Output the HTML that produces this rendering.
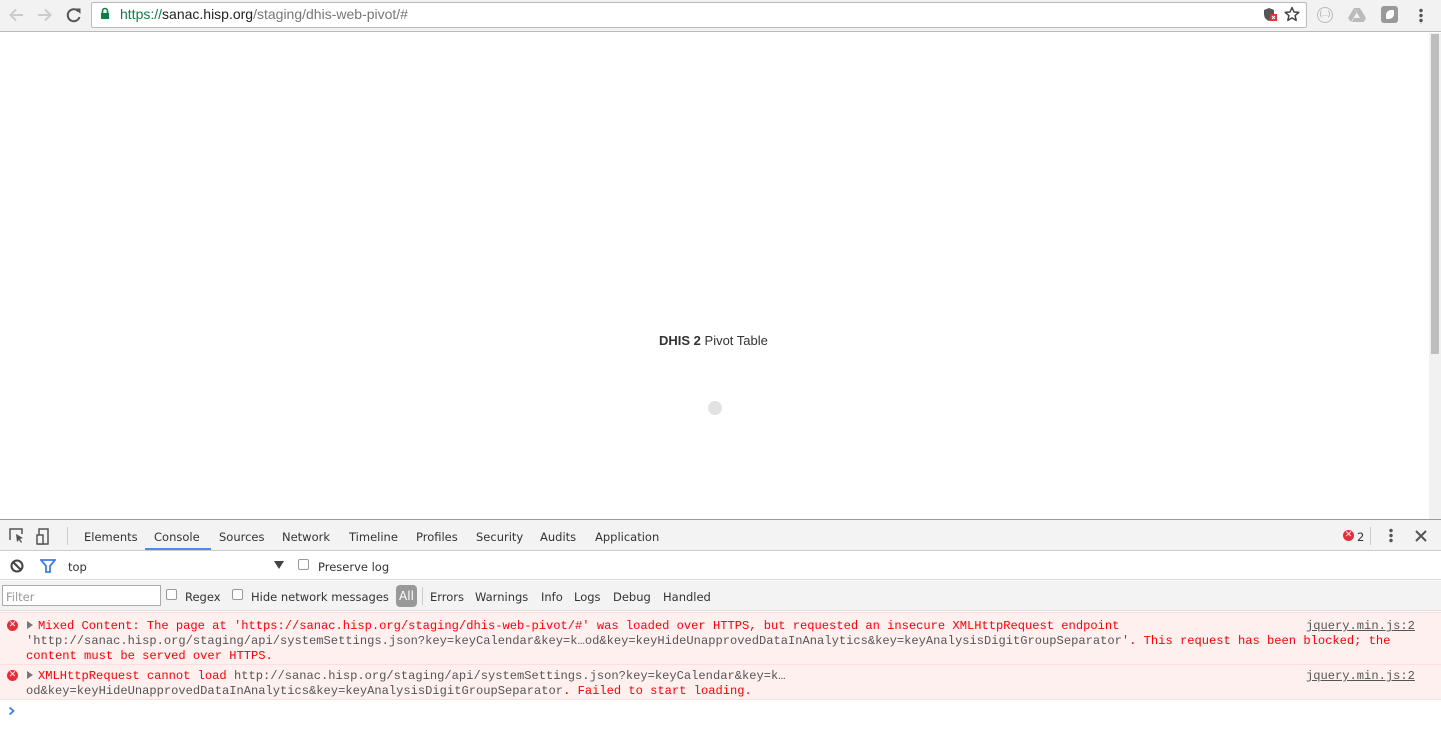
<!DOCTYPE html>
<html><head><meta charset="utf-8"><style>
*{margin:0;padding:0;box-sizing:border-box}
body{width:1441px;height:731px;overflow:hidden;background:#fff;font-family:"Liberation Sans",sans-serif;position:relative}
.a{position:absolute;white-space:nowrap}
.ui{font-family:"DejaVu Sans","Liberation Sans",sans-serif;font-size:11.5px;color:#333}
.mono{font-family:"Liberation Mono",monospace;font-size:12.1px;line-height:15px}
.red{color:#f00}
.gray{color:#555}
.cb{position:absolute;width:11px;height:11px;border:1px solid #999;border-radius:2px;background:#fff}
.err{position:absolute;width:11px;height:11px;border-radius:50%;background:#e0313a;color:#fff;font-size:9px;line-height:11px;text-align:center;font-family:"DejaVu Sans",sans-serif}
.tri{position:absolute;width:0;height:0;border-left:6px solid #777;border-top:4px solid transparent;border-bottom:4px solid transparent}
</style></head><body>
<div class="a" style="left:0;top:0;width:1441px;height:32px;background:#f2f2f2;border-bottom:1px solid #bbb"></div>
<svg class="a" style="left:8px;top:6px" width="80" height="18" viewBox="0 0 80 18">
<path d="M15 9H3M8 3.5L2.5 9 8 14.5" stroke="#ccc" stroke-width="2" fill="none"/>
<path d="M30 9h12M37 3.5L42.5 9 37 14.5" stroke="#ccc" stroke-width="2" fill="none"/>
<path d="M70.5 5.5A6 6 0 1 0 71.5 11" stroke="#555" stroke-width="2" fill="none"/><path d="M67 2.5h5.5v5.5z" fill="#555"/>
</svg>
<div class="a" style="left:91px;top:2px;width:1216px;height:26px;background:#fff;border:1px solid #bbb;border-radius:2px"></div>
<svg class="a" style="left:100px;top:7px" width="10" height="13"><path d="M2.5 6V4a2.5 2.5 0 0 1 5 0v2" stroke="#0b8043" stroke-width="1.6" fill="none"/><rect x="1" y="6" width="8" height="6" fill="#0b8043"/></svg>
<div class="a" style="left:120px;top:6px;font-size:14px;color:#0b8043">https://<span style="color:#222">sanac.hisp.org</span><span style="color:#777">/staging/dhis-web-pivot/#</span></div>
<svg class="a" style="left:1263px;top:7px" width="16" height="16"><path d="M6 1l5 2v4c0 4-2.5 6-5 7-2.5-1-5-3-5-7V3z" fill="#555"/><rect x="7" y="7" width="7" height="7" fill="#d33"/><path d="M9 9l3 3M12 9l-3 3" stroke="#fff" stroke-width="1"/></svg>
<svg class="a" style="left:1284px;top:6px" width="16" height="16"><path d="M8 1.5l2 4.5 4.8.4-3.7 3.2 1.1 4.8L8 11.9l-4.2 2.5 1.1-4.8L1.2 6.4 6 6z" stroke="#444" stroke-width="1.5" fill="none" stroke-linejoin="round"/></svg>
<div class="a" style="left:1317px;top:7px;width:16px;height:16px;border:1.5px solid #bbb;border-radius:50%;font-size:7px;color:#999;text-align:center;line-height:13px">(...)</div>
<svg class="a" style="left:1348px;top:7px" width="18" height="16"><path d="M6 1h6l6 10H12zM6 1L0 11l3 4 6-10zM4 15h12l2-4H6z" fill="#bbb"/></svg>
<div class="a" style="left:1381px;top:6px;width:17px;height:17px;background:#999;border-radius:3px"></div>
<div class="a" style="left:1386px;top:10px;width:8px;height:9px;background:#fff;border-radius:5px 1px 5px 1px"></div>
<div class="a" style="left:1419px;top:8px;width:4px;height:16px;background:radial-gradient(circle,#555 1.5px,transparent 2px) 0 0/4px 5px"></div>
<div class="a" style="left:1429px;top:33px;width:12px;height:487px;background:#f1f1f1"></div>
<div class="a" style="left:1431px;top:34px;width:8px;height:320px;background:#bdbdbd"></div>
<div class="a" style="left:659px;top:333px;font-size:13px;color:#333"><b>DHIS 2</b> Pivot Table</div>
<div class="a" style="left:708px;top:401px;width:14px;height:14px;border-radius:50%;background:#e2e2e2"></div>
<div class="a" style="left:0;top:519px;width:1441px;height:32px;background:#f3f3f3;border-top:1px solid #999;border-bottom:1px solid #ccc"></div>
<svg class="a" style="left:8px;top:527px" width="50" height="18"><path d="M2 13V2h12v5" stroke="#555" stroke-width="1.5" fill="none"/><path d="M8 7l7 4-3 1 2 3-1 1-2-3-2 2z" fill="#555"/><rect x="31" y="2" width="9" height="15" stroke="#555" stroke-width="1.5" fill="none"/><rect x="29" y="8" width="6" height="9" fill="#f3f3f3" stroke="#555" stroke-width="1.5"/></svg>
<div class="a" style="left:67px;top:527px;width:1px;height:18px;background:#ccc"></div>
<div class="a ui" style="left:84px;top:530px">Elements</div>
<div class="a ui" style="left:154px;top:530px">Console</div>
<div class="a" style="left:145px;top:548px;width:66px;height:2px;background:#4a8af4"></div>
<div class="a ui" style="left:219px;top:530px">Sources</div>
<div class="a ui" style="left:282px;top:530px">Network</div>
<div class="a ui" style="left:349px;top:530px">Timeline</div>
<div class="a ui" style="left:416px;top:530px">Profiles</div>
<div class="a ui" style="left:476px;top:530px">Security</div>
<div class="a ui" style="left:540px;top:530px">Audits</div>
<div class="a ui" style="left:595px;top:530px">Application</div>
<div class="err" style="left:1343px;top:530px">✕</div>
<div class="a ui" style="left:1357px;top:530px">2</div>
<div class="a" style="left:1370px;top:527px;width:1px;height:18px;background:#ccc"></div>
<div class="a" style="left:1389px;top:528px;width:4px;height:15px;background:radial-gradient(circle,#555 1.5px,transparent 2px) 0 0/4px 5px"></div>
<svg class="a" style="left:1415px;top:530px" width="12" height="12"><path d="M1 1l10 10M11 1L1 11" stroke="#555" stroke-width="2"/></svg>
<div class="a" style="left:0;top:551px;width:1441px;height:29px;background:#fff;border-bottom:1px solid #ddd"></div>
<svg class="a" style="left:9px;top:558px" width="16" height="16"><circle cx="8" cy="8" r="5.5" stroke="#444" stroke-width="2" fill="none"/><path d="M4 4l8 8" stroke="#444" stroke-width="2"/></svg>
<svg class="a" style="left:40px;top:559px" width="16" height="14"><path d="M1 1h14L10 7v6H6V7z" stroke="#3b7ced" stroke-width="1.8" fill="none"/></svg>
<div class="a ui" style="left:68px;top:560px">top</div>
<div class="a" style="left:274px;top:561px;width:0;height:0;border-top:8px solid #444;border-left:5px solid transparent;border-right:5px solid transparent"></div>
<div class="cb" style="left:298px;top:559px"></div>
<div class="a ui" style="left:318px;top:560px">Preserve log</div>
<div class="a" style="left:0;top:581px;width:1441px;height:30px;background:#f3f3f3;border-bottom:1px solid #ddd"></div>
<div class="a" style="left:2px;top:585px;width:159px;height:21px;background:#fff;border:1px solid #aaa"></div>
<div class="a ui" style="left:6px;top:590px;color:#999">Filter</div>
<div class="cb" style="left:166px;top:589px"></div>
<div class="a ui" style="left:185px;top:590px">Regex</div>
<div class="cb" style="left:232px;top:589px"></div>
<div class="a ui" style="left:251px;top:590px">Hide network messages</div>
<div class="a" style="left:396px;top:585px;width:21px;height:22px;background:#999;border-radius:4px;color:#fff;font-size:12px;text-align:center;line-height:22px;font-family:'DejaVu Sans'">All</div>
<div class="a" style="left:422px;top:587px;width:1px;height:18px;background:#ccc"></div>
<div class="a ui" style="left:430px;top:590px">Errors</div>
<div class="a ui" style="left:475px;top:590px">Warnings</div>
<div class="a ui" style="left:541px;top:590px">Info</div>
<div class="a ui" style="left:574px;top:590px">Logs</div>
<div class="a ui" style="left:613px;top:590px">Debug</div>
<div class="a ui" style="left:663px;top:590px">Handled</div>
<div class="a" style="left:0;top:612px;width:1441px;height:53px;background:#fff0f0;border-top:1px solid #fdd;border-bottom:1px solid #fdd"></div>
<div class="a" style="left:0;top:665px;width:1441px;height:35px;background:#fff0f0;border-bottom:1px solid #fdd"></div>
<div class="err" style="left:7px;top:620px">✕</div>
<div class="tri" style="left:27px;top:621px"></div>
<div class="a mono red" style="left:38px;top:619px">Mixed Content: The page at 'https://sanac.hisp.org/staging/dhis-web-pivot/#' was loaded over HTTPS, but requested an insecure XMLHttpRequest endpoint</div>
<div class="a mono" style="left:26px;top:634px"><span class="gray">'http://sanac.hisp.org/staging/api/systemSettings.json?key=keyCalendar&amp;key=k…od&amp;key=keyHideUnapprovedDataInAnalytics&amp;key=keyAnalysisDigitGroupSeparator'</span><span class="red">. This request has been blocked; the</span></div>
<div class="a mono red" style="left:26px;top:649px">content must be served over HTTPS.</div>
<div class="a mono gray" style="left:1306px;top:619px;text-decoration:underline">jquery.min.js:2</div>
<div class="err" style="left:7px;top:670px">✕</div>
<div class="tri" style="left:27px;top:671px"></div>
<div class="a mono" style="left:38px;top:669px"><span class="red">XMLHttpRequest cannot load </span><span class="gray">http://sanac.hisp.org/staging/api/systemSettings.json?key=keyCalendar&amp;key=k…</span></div>
<div class="a mono" style="left:26px;top:684px"><span class="gray">od&amp;key=keyHideUnapprovedDataInAnalytics&amp;key=keyAnalysisDigitGroupSeparator</span><span class="red">. Failed to start loading.</span></div>
<div class="a mono gray" style="left:1306px;top:669px;text-decoration:underline">jquery.min.js:2</div>
<svg class="a" style="left:8px;top:706px" width="8" height="10"><path d="M1.5 1.5l4 3.5-4 3.5" stroke="#3b7ced" stroke-width="1.8" fill="none"/></svg>
</body></html>
